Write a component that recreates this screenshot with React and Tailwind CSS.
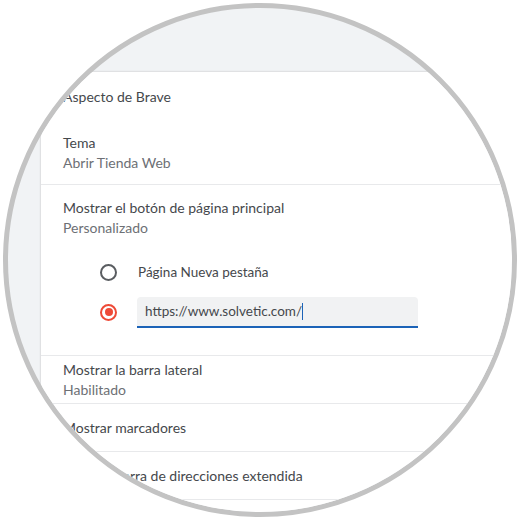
import React from 'react';

const font = { fontFamily: 'Lato, "Open Sans", sans-serif' };

function Radio({ checked }) {
  if (checked) {
    return (
      <span className="flex items-center justify-center w-[17px] h-[17px] rounded-full border-2 border-[#ee4a37]">
        <span className="w-[8px] h-[8px] rounded-full bg-[#ee4a37]" />
      </span>
    );
  }
  return <span className="w-[17px] h-[17px] rounded-full border-2 border-[#5a5d61]" />;
}

function Row({ title, sub }) {
  return (
    <div className="h-[48px] flex flex-col justify-center pl-[22px] border-b border-[#e8e9eb]">
      <div className="leading-[20px] text-[#45484c]">{title}</div>
      {sub && <div className="leading-[20px] text-[#6d7075]">{sub}</div>}
    </div>
  );
}

export default function App() {
  return (
    <div className="w-[520px] h-[520px] bg-white flex items-center justify-center" style={font}>
      <div className="w-[514px] h-[514px] rounded-full border-[5px] border-[#c3c3c3] overflow-hidden bg-[#f1f3f5] flex flex-col">
        <div className="h-[64px] shrink-0" />
        <div className="ml-[33px] bg-white flex-1 text-[14px] shadow-[0_0_2px_rgba(0,0,0,0.22)]">
          <div className="pl-[22px] pt-[15px] pb-[11px] border-b border-[#e8e9eb]">
            <div className="leading-[20px] text-[#45484c]">Aspecto de Brave</div>
            <div className="mt-[26px] leading-[20px] text-[#45484c]">Tema</div>
            <div className="leading-[20px] text-[#6d7075]">Abrir Tienda Web</div>
          </div>

          <div className="pt-[13px] pb-[23px] border-b border-[#e8e9eb]">
            <div className="pl-[22px]">
              <div className="leading-[20px] text-[#45484c]">Mostrar el botón de página principal</div>
              <div className="leading-[20px] text-[#6d7075]">Personalizado</div>
            </div>
            <div className="mt-[14px] pl-[59px]">
              <div className="h-[40px] flex items-center">
                <Radio />
                <span className="ml-[21px] text-[13.5px] text-[#45484c]">Página Nueva pestaña</span>
              </div>
              <div className="h-[40px] flex items-center">
                <Radio checked />
                <div className="ml-[20px] w-[281px] h-[31px] bg-[#f1f2f3] rounded-t-[4px] border-b-2 border-[#1c63b7] flex items-center pl-[8px] text-[13.5px] text-[#45484c]">
                  https://www.solvetic.com/
                  <span className="w-px h-[17px] bg-[#1c63b7]" />
                </div>
              </div>
            </div>
          </div>

          <Row title="Mostrar la barra lateral" sub="Habilitado" />
          <Row title="Mostrar marcadores" />
          <Row title="Mostrar barra de direcciones extendida" />
        </div>
      </div>
    </div>
  );
}
